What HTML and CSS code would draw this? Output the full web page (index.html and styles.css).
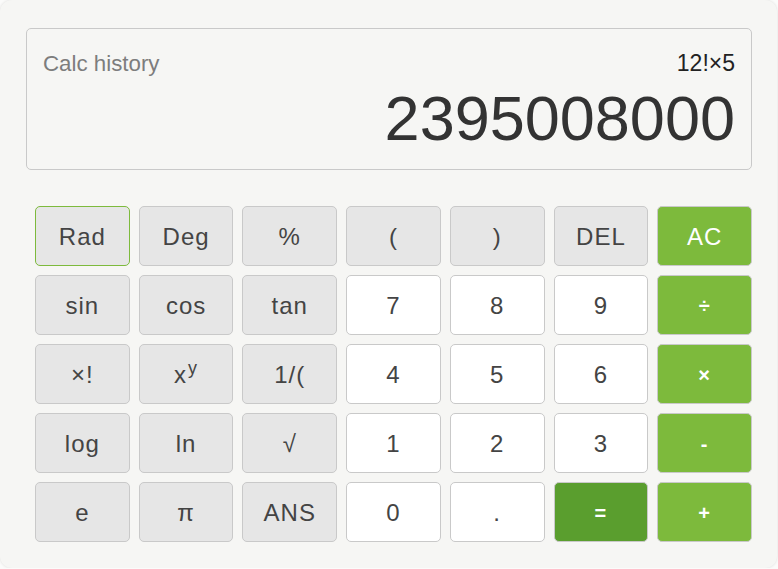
FILE: index.html
```html
<!DOCTYPE html>
<html lang="en">
<head>
    <meta charset="UTF-8">
    <meta name="viewport" content="width=device-width, initial-scale=1.0">
    <title>Calculator</title>
    <link rel="stylesheet" href="styles.css">
</head>
<body>
    <div class="calculator">
        <div class="display">
            <div class="history-row">
                <span class="history-label">Calc history</span>
                <span class="expression">12!×5</span>
            </div>
            <div class="result">2395008000</div>
        </div>

        <div class="keys">
            <button class="key fn active">Rad</button>
            <button class="key fn">Deg</button>
            <button class="key fn">%</button>
            <button class="key fn">(</button>
            <button class="key fn">)</button>
            <button class="key fn">DEL</button>
            <button class="key op">AC</button>

            <button class="key fn">sin</button>
            <button class="key fn">cos</button>
            <button class="key fn">tan</button>
            <button class="key num">7</button>
            <button class="key num">8</button>
            <button class="key num">9</button>
            <button class="key op sign">÷</button>

            <button class="key fn">×!</button>
            <button class="key fn">x<sup>y</sup></button>
            <button class="key fn">1/(</button>
            <button class="key num">4</button>
            <button class="key num">5</button>
            <button class="key num">6</button>
            <button class="key op sign">×</button>

            <button class="key fn">log</button>
            <button class="key fn">ln</button>
            <button class="key fn">√</button>
            <button class="key num">1</button>
            <button class="key num">2</button>
            <button class="key num">3</button>
            <button class="key op sign">-</button>

            <button class="key fn">e</button>
            <button class="key fn">π</button>
            <button class="key fn">ANS</button>
            <button class="key num">0</button>
            <button class="key num">.</button>
            <button class="key equals sign">=</button>
            <button class="key op sign">+</button>
        </div>
    </div>
</body>
</html>
```

FILE: styles.css
```css
body {
    margin: 0;
    background-color: #fbfbfa;
    font-family: 'Liberation Sans', Arial, sans-serif;
}

.calculator {
    width: 777px;
    height: 568px;
    box-sizing: border-box;
    padding: 28px 25px 0 26px;
    background-color: #f6f6f4;
    border-radius: 12px;
    box-shadow: 0 0 3px rgba(0, 0, 0, 0.12);
}

.display {
    border: 1px solid #c9c9c9;
    border-radius: 5px;
    padding: 21px 16px 16px 16px;
}

.history-row {
    display: flex;
    justify-content: space-between;
    align-items: baseline;
    height: 26px;
    line-height: 26px;
}

.history-label {
    font-size: 22.3px;
    color: #7d7d7d;
}

.expression {
    font-size: 23px;
    color: #222;
}

.result {
    margin-top: 7px;
    font-size: 63px;
    line-height: 70px;
    text-align: right;
    color: #333;
}

.keys {
    display: grid;
    grid-template-columns: repeat(7, 1fr);
    grid-auto-rows: 60px;
    gap: 9px;
    margin: 36px 0 0 9px;
}

.key {
    display: flex;
    align-items: center;
    justify-content: center;
    padding: 2px 0 0 0;
    border: 1px solid #c9c9c9;
    border-radius: 5px;
    font-family: inherit;
    font-size: 24px;
    letter-spacing: 1px;
    color: #444;
    cursor: pointer;
}

.key sup {
    font-size: 18px;
    line-height: 0;
    position: relative;
    top: -7px;
    margin-left: 1px;
}

.fn {
    background-color: #e6e6e6;
}

.num {
    background-color: #fff;
}

.active {
    border-color: #7dba3c;
}

.op {
    background-color: #7dba3c;
    color: #fff;
}

.equals {
    background-color: #5a9e2e;
    color: #fff;
}

.sign {
    font-size: 20px;
    font-weight: bold;
}
```
